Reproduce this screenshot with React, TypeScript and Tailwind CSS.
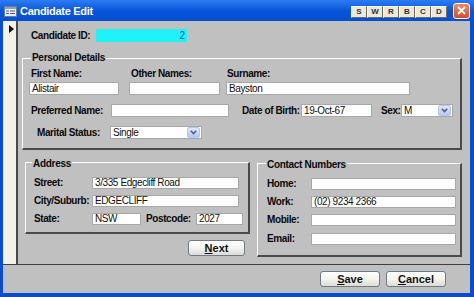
import React from 'react'

function Field({ className, children }: { className: string; children?: React.ReactNode }) {
  return (
    <div
      className={`bg-white border border-[#a8a8a8] flex items-center pl-[2px] text-[10px] tracking-[-0.4px] text-[#111] leading-none overflow-hidden ${className}`}
    >
      {children}
    </div>
  )
}

function Combo({ className, value }: { className: string; value: string }) {
  return (
    <div className={`bg-white border border-[#a8a8a8] flex items-center ${className}`}>
      <span className="flex-1 pl-[2px] text-[10px] tracking-[-0.4px] text-[#111] leading-none">{value}</span>
      <span className="w-[13px] h-[11px] mr-[1px] rounded-[2px] bg-gradient-to-b from-[#dfe8fc] to-[#b5c8f2] border border-[#b6c6ec] flex items-center justify-center">
        <svg width="7" height="5" viewBox="0 0 7 5">
          <path d="M0.8 0.8 L3.5 3.6 L6.2 0.8" fill="none" stroke="#4d6185" strokeWidth="1.6" />
        </svg>
      </span>
    </div>
  )
}

function Label({ className, children }: { className: string; children: React.ReactNode }) {
  return (
    <span className={`font-bold text-[10px] tracking-[-0.4px] text-[#0a0a0a] leading-none whitespace-nowrap ${className}`}>
      {children}
    </span>
  )
}

function Legend({ className, children }: { className: string; children: React.ReactNode }) {
  return (
    <span
      className={`absolute bg-[#c0c0c0] px-[1px] font-bold text-[10px] tracking-[-0.3px] text-[#0a0a0a] leading-[12px] whitespace-nowrap ${className}`}
    >
      {children}
    </span>
  )
}

function XpButton({ className, first, rest }: { className: string; first: string; rest: string }) {
  return (
    <button
      className={`h-[16px] rounded-[3px] border border-[#707a86] bg-gradient-to-b from-white via-[#f4f4f0] to-[#dcdcd4] font-bold text-[11px] text-[#111] leading-none flex items-center justify-center ${className}`}
    >
      <span className="underline underline-offset-[1px]">{first}</span>
      {rest}
    </button>
  )
}

export default function App() {
  return (
    <div className="w-[474px] h-[297px] bg-[#0a4ccf] flex flex-col font-['Liberation_Sans',Arial,sans-serif] overflow-hidden">
      {/* title bar */}
      <div className="h-[21px] flex items-center bg-gradient-to-b from-[#2d7cf2] via-[#0856dc] to-[#064ecf] pl-[4px] pr-[4px]">
        <svg width="13" height="11" viewBox="0 0 13 11" className="mt-[2px]">
          <rect x="0.5" y="0.5" width="12" height="10" fill="#e9ecf2" stroke="#6d7c98" />
          <rect x="1" y="1" width="11" height="2" fill="#8da3c8" />
          <rect x="2" y="4.5" width="3" height="1" fill="#55607a" />
          <rect x="6" y="4.5" width="5" height="1" fill="#55607a" />
          <rect x="2" y="7" width="3" height="1" fill="#55607a" />
          <rect x="6" y="7" width="5" height="1" fill="#55607a" />
        </svg>
        <span className="ml-[3px] mt-[2px] text-white font-bold text-[11px] tracking-[-0.3px] leading-none">
          Candidate Edit
        </span>
        <div className="flex-1" />
        <div className="flex mt-[2px]">
          {['S', 'W', 'R', 'B', 'C', 'D'].map((l) => (
            <span
              key={l}
              className="w-[16px] h-[12px] bg-[#ece9d8] border border-[#6b6b6b] border-l-[#f8f8f4] border-t-[#f8f8f4] flex items-center justify-center text-[8px] font-bold text-[#333] leading-none"
            >
              {l}
            </span>
          ))}
        </div>
        <span className="ml-[6px] w-[17px] h-[16px] rounded-[3px] border border-white bg-gradient-to-b from-[#ec8a66] to-[#d8481f] flex items-center justify-center">
          <svg width="9" height="9" viewBox="0 0 9 9">
            <path d="M1 1 L8 8 M8 1 L1 8" stroke="white" strokeWidth="1.8" />
          </svg>
        </span>
      </div>

      {/* window body */}
      <div className="flex-1 ml-[3px] mr-[4px] mb-[4px] bg-[#c0c0c0] flex flex-col">
        <div className="h-[244px] flex border-b border-[#404040]">
          {/* record selector */}
          <div className="w-[15px] bg-[#f4f1e8] border-r-2 border-[#4a4a4a] pl-[6px] pt-[4px]">
            <svg width="5" height="8" viewBox="0 0 5 8">
              <path d="M0 0 L5 4 L0 8 Z" fill="#000" />
            </svg>
          </div>

          {/* form detail */}
          <div className="flex-1 pt-[8px]">
            <div className="flex items-center h-[13px] pl-[13px]">
              <Label className="w-[65px] text-[10.5px]">Candidate ID:</Label>
              <div className="w-[91px] h-[13px] bg-[#1ff3f7] flex items-center justify-end pr-[2px] text-[10px] text-[#3052b0] leading-none">
                2
              </div>
            </div>

            {/* personal details */}
            <div className="relative mt-[16px] ml-[4px] w-[440px] h-[92px] border-t border-l border-white border-r-2 border-b-2 border-r-[#4a4a4a] border-b-[#4a4a4a]">
              <Legend className="left-[8px] -top-[7px]">Personal Details</Legend>
              <div className="flex items-center h-[12px] mt-[9px] pl-[8px]">
                <Label className="w-[100px]">First Name:</Label>
                <Label className="w-[96px]">Other Names:</Label>
                <Label className="">Surname:</Label>
              </div>
              <div className="flex items-center mt-[2px] pl-[6px]">
                <Field className="w-[90px] h-[13px]">Alistair</Field>
                <Field className="ml-[10px] w-[91px] h-[13px]" />
                <Field className="ml-[6px] w-[184px] h-[13px]">Bayston</Field>
              </div>
              <div className="flex items-center mt-[9px] pl-[8px]">
                <Label className="w-[80px]">Preferred Name:</Label>
                <Field className="w-[118px] h-[13px]" />
                <Label className="ml-[13px] w-[59px]">Date of Birth:</Label>
                <Field className="w-[71px] h-[13px]">19-Oct-67</Field>
                <Label className="ml-[9px] w-[20px]">Sex:</Label>
                <Combo className="w-[52px] h-[13px]" value="M" />
              </div>
              <div className="flex items-center mt-[9px] pl-[14px]">
                <Label className="w-[73px]">Marital Status:</Label>
                <Combo className="w-[92px] h-[13px]" value="Single" />
              </div>
            </div>

            <div className="flex mt-[12px]">
              {/* address */}
              <div className="ml-[7px] flex flex-col">
                <div className="relative w-[225px] h-[72px] border-t border-l border-white border-r-2 border-b-2 border-r-[#4a4a4a] border-b-[#4a4a4a]">
                  <Legend className="left-[6px] -top-[5px]">Address</Legend>
                  <div className="flex items-center mt-[14px] pl-[8px]">
                    <Label className="w-[58px]">Street:</Label>
                    <Field className="w-[147px] h-[12px]">3/335 Edgecliff Road</Field>
                  </div>
                  <div className="flex items-center mt-[6px] pl-[8px]">
                    <Label className="w-[58px]">City/Suburb:</Label>
                    <Field className="w-[147px] h-[12px]">EDGECLIFF</Field>
                  </div>
                  <div className="flex items-center mt-[6px] pl-[8px]">
                    <Label className="w-[58px]">State:</Label>
                    <Field className="w-[49px] h-[12px]">NSW</Field>
                    <Label className="ml-[5px] w-[50px]">Postcode:</Label>
                    <Field className="w-[47px] h-[12px]">2027</Field>
                  </div>
                </div>
                <XpButton className="mt-[6px] ml-[163px] w-[57px]" first="N" rest="ext" />
              </div>

              {/* contact numbers */}
              <div className="relative ml-[7px] mt-[1px] w-[205px] h-[94px] border-t border-l border-white border-r-2 border-b-2 border-r-[#4a4a4a] border-b-[#4a4a4a]">
                <Legend className="left-[8px] -top-[5px]">Contact Numbers</Legend>
                <div className="flex items-center mt-[14px] pl-[9px]">
                  <Label className="w-[44px]">Home:</Label>
                  <Field className="w-[145px] h-[12px]" />
                </div>
                <div className="flex items-center mt-[6px] pl-[9px]">
                  <Label className="w-[44px]">Work:</Label>
                  <Field className="w-[145px] h-[12px]">(02) 9234 2366</Field>
                </div>
                <div className="flex items-center mt-[6px] pl-[9px]">
                  <Label className="w-[44px]">Mobile:</Label>
                  <Field className="w-[145px] h-[12px]" />
                </div>
                <div className="flex items-center mt-[7px] pl-[9px]">
                  <Label className="w-[44px]">Email:</Label>
                  <Field className="w-[145px] h-[12px]" />
                </div>
              </div>
            </div>
          </div>
        </div>

        {/* footer */}
        <div className="flex-1 flex items-center justify-end pr-[24px] gap-[6px]">
          <XpButton className="w-[60px]" first="S" rest="ave" />
          <XpButton className="w-[60px]" first="C" rest="ancel" />
        </div>
      </div>
    </div>
  )
}
